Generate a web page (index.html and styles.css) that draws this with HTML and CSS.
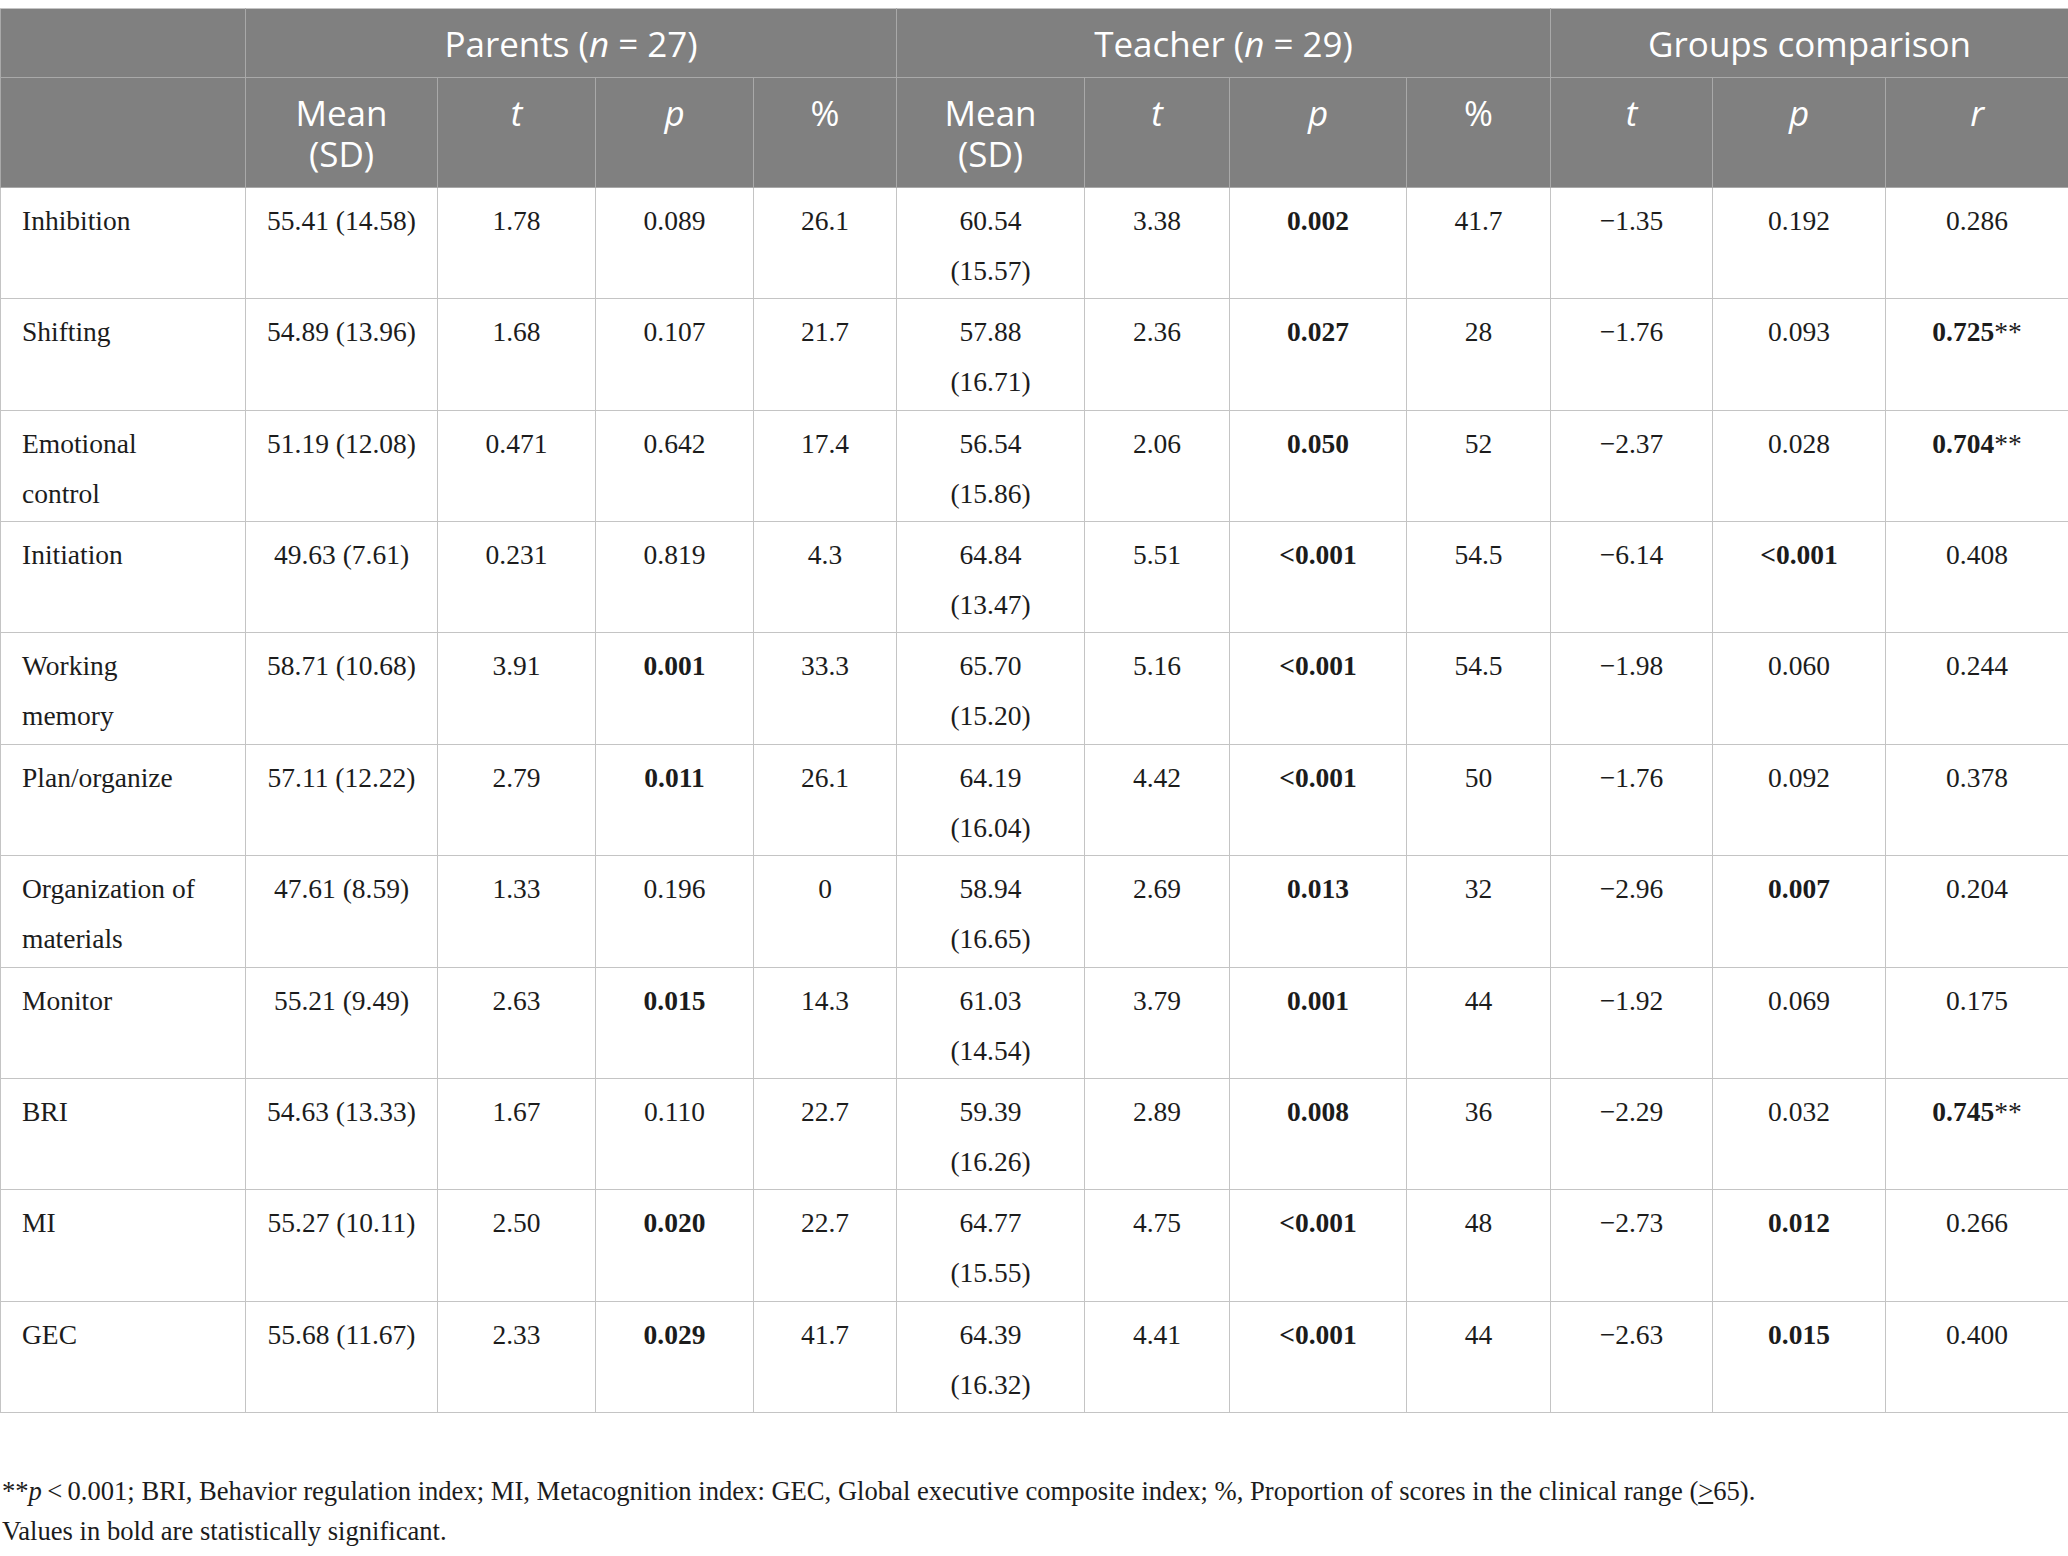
FILE: index.html
```html
<!DOCTYPE html>
<html lang="en">
<head>
    <meta charset="UTF-8">
    <title>BRIEF scores: parents and teachers</title>
    <link rel="stylesheet" href="styles.css">
</head>
<body>
    <table class="stats">
        <colgroup>
            <col class="c-label">
            <col class="c-mean-p">
            <col class="c-t-p">
            <col class="c-p-p">
            <col class="c-pc-p">
            <col class="c-mean-t">
            <col class="c-t-t">
            <col class="c-p-t">
            <col class="c-pc-t">
            <col class="c-t-g">
            <col class="c-p-g">
            <col class="c-r-g">
        </colgroup>
        <thead>
            <tr class="group-row">
                <th></th>
                <th colspan="4">Parents (<i>n</i> = 27)</th>
                <th colspan="4">Teacher (<i>n</i> = 29)</th>
                <th colspan="3">Groups comparison</th>
            </tr>
            <tr class="label-row">
                <th></th>
                <th>Mean<br>(SD)</th>
                <th><i>t</i></th>
                <th><i>p</i></th>
                <th>%</th>
                <th>Mean<br>(SD)</th>
                <th><i>t</i></th>
                <th><i>p</i></th>
                <th>%</th>
                <th><i>t</i></th>
                <th><i>p</i></th>
                <th><i>r</i></th>
            </tr>
        </thead>
        <tbody>
            <tr>
                <td>Inhibition</td>
                <td>55.41 (14.58)</td><td>1.78</td><td>0.089</td><td>26.1</td>
                <td class="narrow">60.54 (15.57)</td><td>3.38</td><td><b>0.002</b></td><td>41.7</td>
                <td>&minus;1.35</td><td>0.192</td><td>0.286</td>
            </tr>
            <tr>
                <td>Shifting</td>
                <td>54.89 (13.96)</td><td>1.68</td><td>0.107</td><td>21.7</td>
                <td class="narrow">57.88 (16.71)</td><td>2.36</td><td><b>0.027</b></td><td>28</td>
                <td>&minus;1.76</td><td>0.093</td><td><b>0.725</b>**</td>
            </tr>
            <tr>
                <td>Emotional control</td>
                <td>51.19 (12.08)</td><td>0.471</td><td>0.642</td><td>17.4</td>
                <td class="narrow">56.54 (15.86)</td><td>2.06</td><td><b>0.050</b></td><td>52</td>
                <td>&minus;2.37</td><td>0.028</td><td><b>0.704</b>**</td>
            </tr>
            <tr>
                <td>Initiation</td>
                <td>49.63 (7.61)</td><td>0.231</td><td>0.819</td><td>4.3</td>
                <td class="narrow">64.84 (13.47)</td><td>5.51</td><td><b>&lt;0.001</b></td><td>54.5</td>
                <td>&minus;6.14</td><td><b>&lt;0.001</b></td><td>0.408</td>
            </tr>
            <tr>
                <td>Working memory</td>
                <td>58.71 (10.68)</td><td>3.91</td><td><b>0.001</b></td><td>33.3</td>
                <td class="narrow">65.70 (15.20)</td><td>5.16</td><td><b>&lt;0.001</b></td><td>54.5</td>
                <td>&minus;1.98</td><td>0.060</td><td>0.244</td>
            </tr>
            <tr>
                <td>Plan/organize</td>
                <td>57.11 (12.22)</td><td>2.79</td><td><b>0.011</b></td><td>26.1</td>
                <td class="narrow">64.19 (16.04)</td><td>4.42</td><td><b>&lt;0.001</b></td><td>50</td>
                <td>&minus;1.76</td><td>0.092</td><td>0.378</td>
            </tr>
            <tr>
                <td>Organization of materials</td>
                <td>47.61 (8.59)</td><td>1.33</td><td>0.196</td><td>0</td>
                <td class="narrow">58.94 (16.65)</td><td>2.69</td><td><b>0.013</b></td><td>32</td>
                <td>&minus;2.96</td><td><b>0.007</b></td><td>0.204</td>
            </tr>
            <tr>
                <td>Monitor</td>
                <td>55.21 (9.49)</td><td>2.63</td><td><b>0.015</b></td><td>14.3</td>
                <td class="narrow">61.03 (14.54)</td><td>3.79</td><td><b>0.001</b></td><td>44</td>
                <td>&minus;1.92</td><td>0.069</td><td>0.175</td>
            </tr>
            <tr>
                <td>BRI</td>
                <td>54.63 (13.33)</td><td>1.67</td><td>0.110</td><td>22.7</td>
                <td class="narrow">59.39 (16.26)</td><td>2.89</td><td><b>0.008</b></td><td>36</td>
                <td>&minus;2.29</td><td>0.032</td><td><b>0.745</b>**</td>
            </tr>
            <tr>
                <td>MI</td>
                <td>55.27 (10.11)</td><td>2.50</td><td><b>0.020</b></td><td>22.7</td>
                <td class="narrow">64.77 (15.55)</td><td>4.75</td><td><b>&lt;0.001</b></td><td>48</td>
                <td>&minus;2.73</td><td><b>0.012</b></td><td>0.266</td>
            </tr>
            <tr>
                <td>GEC</td>
                <td>55.68 (11.67)</td><td>2.33</td><td><b>0.029</b></td><td>41.7</td>
                <td class="narrow">64.39 (16.32)</td><td>4.41</td><td><b>&lt;0.001</b></td><td>44</td>
                <td>&minus;2.63</td><td><b>0.015</b></td><td>0.400</td>
            </tr>
        </tbody>
    </table>
    <div class="notes">
        <p>**<i>p</i>&thinsp;&lt;&thinsp;0.001; BRI, Behavior regulation index; MI, Metacognition index: GEC, Global executive composite index; %, Proportion of scores in the clinical range (<u>&gt;</u>65).</p>
        <p>Values in bold are statistically significant.</p>
    </div>
</body>
</html>
```

FILE: styles.css
```css
body {
    margin: 0;
    padding-top: 8px;
    background-color: #fff;
    color: #1c1c1c;
    font-family: "Liberation Serif", "Times New Roman", serif;
}
.stats {
    width: 2068px;
    table-layout: fixed;
    border-collapse: collapse;
}
.c-label { width: 245px; }
.c-mean-p { width: 192px; }
.c-t-p { width: 158px; }
.c-p-p { width: 158px; }
.c-pc-p { width: 143px; }
.c-mean-t { width: 188px; }
.c-t-t { width: 145px; }
.c-p-t { width: 177px; }
.c-pc-t { width: 144px; }
.c-t-g { width: 162px; }
.c-p-g { width: 173px; }
.c-r-g { width: 183px; }

.stats th {
    background-color: #808080;
    color: #fff;
    font-family: "Open Sans", "Liberation Sans", sans-serif;
    font-weight: 400;
    font-size: 35px;
    line-height: 41px;
    text-align: center;
    border: 1px solid #a9a9a9;
    padding: 0 8px;
}
.stats thead tr:first-child th {
    border-top-color: #c4c4c4;
}
.group-row {
    height: 69px;
}
.group-row th {
    vertical-align: middle;
}
.label-row {
    height: 110px;
}
.label-row th {
    vertical-align: top;
    padding-top: 14px;
}
.stats td {
    border: 1px solid #c4c4c4;
    font-size: 27.5px;
    line-height: 50px;
    text-align: center;
    vertical-align: top;
    padding: 8px 12px 0;
}
.stats td.narrow {
    padding-left: 30px;
    padding-right: 30px;
}
.stats tbody tr {
    height: 111.36px;
}
.stats td:first-child {
    text-align: left;
    padding-left: 21px;
    padding-right: 39px;
}
.stats td b {
    font-weight: 700;
}
.notes {
    margin-top: 58px;
    padding-left: 2px;
    font-size: 26.6px;
    line-height: 40px;
}
.notes p {
    margin: 0;
}
```
